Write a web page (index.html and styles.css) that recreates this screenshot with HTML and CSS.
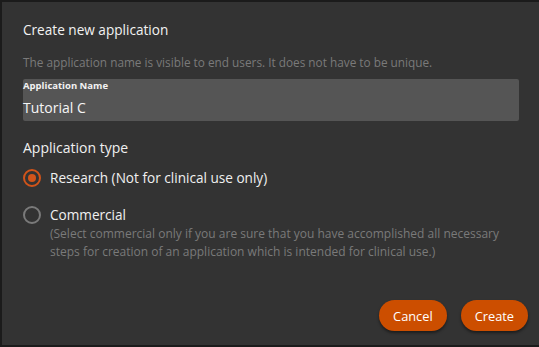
FILE: index.html
```html
<!DOCTYPE html>
<html>
<head>
<meta charset="utf-8">
<link rel="stylesheet" href="styles.css">
</head>
<body>
<div class="dialog">
  <h1 class="title">Create new application</h1>
  <p class="hint">The application name is visible to end users. It does not have to be unique.</p>
  <div class="field">
    <div class="field-label">Application Name</div>
    <div class="field-value">Tutorial C</div>
  </div>
  <h2 class="section">Application type</h2>
  <div class="options">
    <label class="option">
      <span class="radio checked"></span>
      <span class="option-text">Research (Not for clinical use only)</span>
    </label>
    <label class="option">
      <span class="radio"></span>
      <span class="option-body">
        <span class="option-text">Commercial</span>
        <span class="option-note">(Select commercial only if you are sure that you have accomplished all necessary steps for creation of an application which is intended for clinical use.)</span>
      </span>
    </label>
  </div>
  <div class="actions">
    <button class="btn">Cancel</button>
    <button class="btn">Create</button>
  </div>
</div>
</body>
</html>
```
FILE: styles.css
```css
html, body {
  margin: 0;
  padding: 0;
  background: #1b1b1b;
  height: 347px;
  overflow: hidden;
}
body {
  font-family: "Open Sans", "Noto Sans", sans-serif;
  color: #ececec;
}
.dialog {
  margin: 2px 0 0 2px;
  height: 343px;
  background: #333333;
  box-sizing: border-box;
  padding: 18px 20px 0 21px;
  display: flex;
  flex-direction: column;
}
.title {
  margin: 0;
  font-size: 13.6px;
  font-weight: 400;
  line-height: 20px;
  color: #f2f2f2;
}
.hint {
  margin: 14px 0 0;
  font-size: 11.8px;
  line-height: 16px;
  color: #7a7a7a;
}
.field {
  margin-top: 9px;
  height: 42px;
  background: #555555;
  border-radius: 2px;
  box-sizing: border-box;
  padding-top: 1px;
}
.field-label {
  font-size: 9.5px;
  font-weight: 700;
  line-height: 12px;
  color: #f2f2f2;
}
.field-value {
  margin-top: 6px;
  font-size: 14px;
  line-height: 20px;
  color: #f5f5f5;
}
.section {
  margin: 17px 0 0;
  font-size: 14px;
  font-weight: 400;
  line-height: 20px;
  color: #f0f0f0;
}
.options {
  margin-top: 10px;
  display: flex;
  flex-direction: column;
  gap: 17px;
}
.option {
  display: flex;
  align-items: flex-start;
  gap: 9px;
}
.radio {
  width: 14px;
  height: 14px;
  border: 2px solid #7a7a7a;
  border-radius: 50%;
  flex: none;
  margin-top: 1px;
  position: relative;
}
.radio.checked {
  border-color: #d2541a;
}
.radio.checked::after {
  content: "";
  position: absolute;
  left: 3px;
  top: 3px;
  width: 8px;
  height: 8px;
  border-radius: 50%;
  background: #d2541a;
}
.option-text {
  font-size: 13.6px;
  line-height: 20px;
  color: #f0f0f0;
}
.option-body {
  display: flex;
  flex-direction: column;
}
.option-note {
  font-size: 12px;
  line-height: 18px;
  color: #7a7a7a;
}
.actions {
  margin-top: auto;
  margin-bottom: 14px;
  margin-right: -9px;
  display: flex;
  justify-content: flex-end;
  gap: 14px;
}
.btn {
  font-family: inherit;
  font-size: 12.8px;
  color: #fff;
  background: #cc4e00;
  border: none;
  border-radius: 16px;
  height: 31px;
  padding: 0 14px;
  box-shadow: 0 2px 3px rgba(0,0,0,0.45);
}
```
